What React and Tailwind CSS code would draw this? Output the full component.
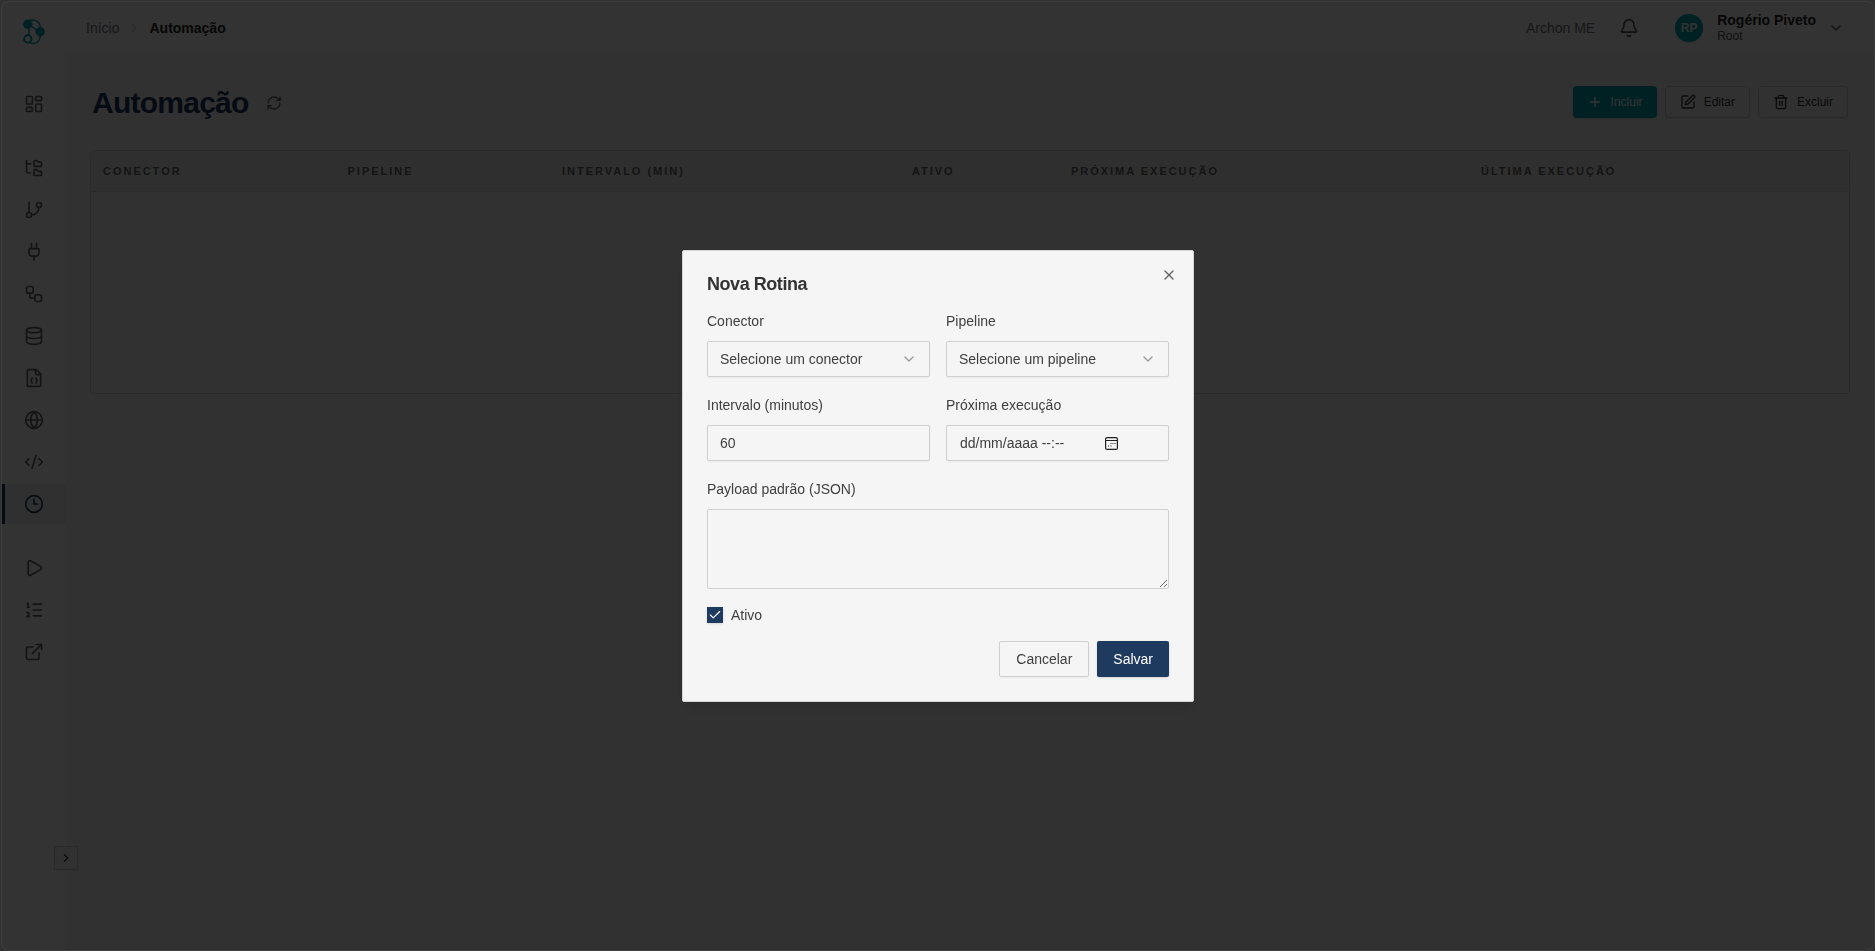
import React from "react";
import {
  Bell,
  Check,
  ChevronDown,
  ChevronRight,
  Clock3,
  CodeXml,
  Database,
  ExternalLink,
  FileJson,
  FolderTree,
  GitBranch,
  Globe,
  LayoutDashboard,
  ListOrdered,
  Play,
  Plug,
  Plus,
  RefreshCw,
  SquarePen,
  Trash2,
  Workflow,
  X,
} from "lucide-react";

const navGroups = [
  [{ label: "Painel", icon: LayoutDashboard }],
  [
    { label: "Projetos", icon: FolderTree },
    { label: "Versões", icon: GitBranch },
    { label: "Conectores", icon: Plug },
    { label: "Pipelines", icon: Workflow },
    { label: "Dados", icon: Database },
    { label: "Esquemas", icon: FileJson },
    { label: "Endpoints", icon: Globe },
    { label: "Scripts", icon: CodeXml },
    { label: "Automação", icon: Clock3, active: true },
  ],
  [
    { label: "Executar", icon: Play },
    { label: "Fila", icon: ListOrdered },
    { label: "Abrir", icon: ExternalLink },
  ],
];

const columns = [
  "Conector",
  "Pipeline",
  "Intervalo (min)",
  "Ativo",
  "Próxima execução",
  "Última execução",
];

const fieldClass =
  "h-9 w-full rounded-xs border border-[#cfcfcf] bg-transparent px-3 text-sm text-[#404040] shadow-xs outline-none";

const Logo = () => (
  <svg viewBox="0 0 24 26" className="h-[26px] w-6" fill="none" stroke="#00a3b4">
    <path d="M6 1.500C9 .9 13 .8 15.500 2.500C17.500 4 18.400 6.500 18.400 10" strokeWidth="1.400" />
    <path d="M18.400 15C18.400 19 17.500 21.500 15.500 23C13 24.700 9.500 24.700 7.500 23.500" strokeWidth="1.400" />
    <path d="M7 5v12M6 5l12 8" strokeWidth="1.400" />
    <circle cx="5.800" cy="5.300" r="4.700" fill="#00a3b4" stroke="none" />
    <circle cx="18.200" cy="12.700" r="4.700" fill="#00a3b4" stroke="none" />
    <circle cx="5.800" cy="20" r="3.700" strokeWidth="2" />
  </svg>
);

const Sidebar = () => (
  <aside className="relative flex w-16 shrink-0 flex-col bg-white">
    <a href="#inicio" aria-label="Archon" className="flex h-[62px] items-center justify-center">
      <Logo />
    </a>
    <nav className="mt-[21px] flex flex-col gap-6">
      {navGroups.map((group, i) => (
        <div key={i} className="flex flex-col gap-0.5">
          {group.map(({ label, icon: Icon, active }) => (
            <a
              key={label}
              href={`#${label.toLowerCase()}`}
              aria-label={label}
              className={
                active
                  ? "flex h-10 items-center justify-center border-l-3 border-[#1e3a5f] bg-[#f0f0f0] pr-[3px] text-[#1e3a5f]"
                  : "flex h-10 items-center justify-center text-[#666666]"
              }
            >
              <Icon size={20} />
            </a>
          ))}
        </div>
      ))}
    </nav>
    <button
      aria-label="Expandir menu"
      className="absolute -right-3 bottom-[81px] flex size-6 items-center justify-center border border-[#cccccc] bg-[#f5f5f5] text-[#333333] shadow-xs"
    >
      <ChevronRight size={14} />
    </button>
  </aside>
);

const Header = () => (
  <header className="flex h-[53px] items-center justify-between bg-white pr-[30px] pl-5">
    <nav className="flex items-center gap-2 text-sm">
      <a href="#inicio" className="text-[#737373]">
        Início
      </a>
      <ChevronRight size={14} className="text-[#c4c4c4]" />
      <span className="font-bold text-[#262626]">Automação</span>
    </nav>
    <div className="flex items-center">
      <span className="text-sm text-[#737373]">Archon ME</span>
      <button aria-label="Notificações" className="ml-6 text-[#555555]">
        <Bell size={20} />
      </button>
      <button className="ml-9 flex items-center text-left">
        <span className="flex size-7 items-center justify-center rounded-full bg-[#00a3b4] text-xs font-bold text-white shadow-sm">
          RP
        </span>
        <span className="mr-3 ml-3.5 flex flex-col">
          <span className="text-sm leading-4 font-bold text-[#262626]">Rogério Piveto</span>
          <span className="text-xs leading-4 text-[#555555]">Root</span>
        </span>
        <ChevronDown size={16} className="text-[#555555]" />
      </button>
    </div>
  </header>
);

const Toolbar = () => (
  <div className="mb-6 flex items-start justify-between px-0.5 pt-2 pb-1.5">
    <div className="flex items-center gap-[17px]">
      <h1 className="text-3xl leading-[34px] font-bold tracking-tight text-[#1e3a5f]">
        Automação
      </h1>
      <button aria-label="Atualizar" className="text-[#666666]">
        <RefreshCw size={16} />
      </button>
    </div>
    <div className="flex gap-2 text-xs">
      <button className="flex h-8 items-center gap-2 rounded-sm bg-[#00a3b4] px-3.5 text-white shadow-sm">
        <Plus size={16} />
        Incluir
      </button>
      <button className="flex h-8 items-center gap-2 rounded-sm border border-[#cccccc] px-3.5 text-[#333333] shadow-xs">
        <SquarePen size={16} />
        Editar
      </button>
      <button className="flex h-8 items-center gap-2 rounded-sm border border-[#cccccc] px-3.5 text-[#333333] shadow-xs">
        <Trash2 size={16} />
        Excluir
      </button>
    </div>
  </div>
);

const RoutinesTable = () => (
  <div className="overflow-hidden rounded-sm border border-[#d0d0d0]">
    <table className="w-full text-left">
      <thead className="border-b border-[#d0d0d0] bg-[#ebebeb]">
        <tr>
          {columns.map((name) => (
            <th
              key={name}
              className="h-10 px-3 text-[11px] font-bold tracking-[0.18em] whitespace-nowrap text-[#666666] uppercase"
            >
              {name}
            </th>
          ))}
        </tr>
      </thead>
      <tbody>
        <tr>
          <td colSpan={columns.length} className="h-[202px]" />
        </tr>
      </tbody>
    </table>
  </div>
);

const Field = ({ id, label, children }) => (
  <div className="flex flex-col gap-2">
    <label htmlFor={id} className="text-sm leading-6">
      {label}
    </label>
    {children}
  </div>
);

const SelectField = ({ id, label, placeholder }) => (
  <Field id={id} label={label}>
    <div className="relative">
      <select id={id} className={`${fieldClass} appearance-none`}>
        <option>{placeholder}</option>
      </select>
      <ChevronDown
        size={16}
        className="pointer-events-none absolute top-2.5 right-[13px] opacity-50"
      />
    </div>
  </Field>
);

const CalendarIcon = () => (
  <svg viewBox="0 0 13 13" className="size-[13px]" fill="none" stroke="#222222">
    <rect x=".6" y=".6" width="11.800" height="11.800" rx="1.500" strokeWidth="1.200" />
    <path d="M1 3.500h11" strokeWidth="1" />
    <path d="M5.500 6.500h1M7.500 6.500h1M9.500 6.500h1M3 9h1M5.500 9h1" strokeWidth="1" />
  </svg>
);

const RoutineDialog = () => (
  <div className="fixed inset-0 flex items-center justify-center bg-black/80 pt-px pl-px">
    <form
      role="dialog"
      aria-labelledby="dialog-title"
      onSubmit={(e) => e.preventDefault()}
      className="relative flex w-full max-w-lg flex-col gap-4 rounded-xs border border-[#d4d4d4] bg-[#f5f5f5] p-6 text-[#404040] shadow-lg"
    >
      <h2
        id="dialog-title"
        className="text-lg leading-[18px] font-bold tracking-tight text-[#333333]"
      >
        Nova Rotina
      </h2>
      <button type="button" aria-label="Fechar" className="absolute top-4 right-4 opacity-80">
        <X size={16} />
      </button>

      <div className="grid grid-cols-2 gap-4">
        <SelectField id="conector" label="Conector" placeholder="Selecione um conector" />
        <SelectField id="pipeline" label="Pipeline" placeholder="Selecione um pipeline" />
        <Field id="intervalo" label="Intervalo (minutos)">
          <input id="intervalo" defaultValue="60" inputMode="numeric" className={fieldClass} />
        </Field>
        <Field id="proxima" label="Próxima execução">
          <div className={`${fieldClass} flex items-center`}>
            <input
              id="proxima"
              placeholder="dd/mm/aaaa --:--"
              className="w-[146px] pl-px outline-none placeholder:text-[#404040]"
            />
            <CalendarIcon />
          </div>
        </Field>
      </div>

      <Field id="payload" label="Payload padrão (JSON)">
        <textarea
          id="payload"
          className="block h-20 w-full rounded-xs border border-[#cfcfcf] px-3 py-2 text-sm outline-none"
        />
      </Field>

      <div className="flex h-5 items-center gap-2">
        <span className="relative flex size-4">
          <input
            id="ativo"
            type="checkbox"
            defaultChecked
            className="peer size-4 appearance-none border border-[#1e3a5f] shadow-sm checked:bg-[#1e3a5f]"
          />
          <Check
            size={14}
            className="pointer-events-none absolute top-px left-px hidden text-white peer-checked:block"
          />
        </span>
        <label htmlFor="ativo" className="text-sm">
          Ativo
        </label>
      </div>

      <div className="flex justify-end gap-2 text-sm font-medium">
        <button
          type="button"
          className="h-9 rounded-xs border border-[#cfcfcf] px-4 shadow-xs"
        >
          Cancelar
        </button>
        <button type="submit" className="h-9 rounded-xs bg-[#1e3a5f] px-4 text-white shadow-sm">
          Salvar
        </button>
      </div>
    </form>
  </div>
);

const App = () => {
  return (
    <div className="flex min-h-screen bg-[#f5f5f5] pt-px pr-px pl-0.5 font-['Liberation_Sans',sans-serif]">
      <Sidebar />
      <div className="flex min-w-0 flex-1 flex-col">
        <Header />
        <main className="px-6 pt-6">
          <Toolbar />
          <RoutinesTable />
        </main>
      </div>
      <RoutineDialog />
      <div className="pointer-events-none fixed top-px right-0 bottom-0 left-px rounded-lg border border-[#3d3d3d]" />
    </div>
  );
};

export default App;
